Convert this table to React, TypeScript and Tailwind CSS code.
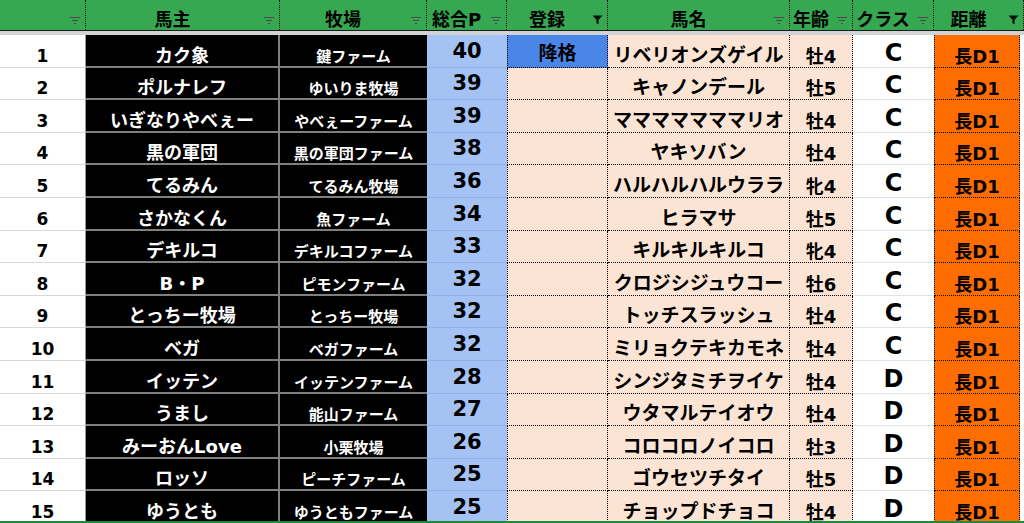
import React from "react";

type Row = [number, string, string, number, string, string, string, string];

const rows: Row[] = [
  [1, "カク象", "鍵ファーム", 40, "降格", "リベリオンズゲイル", "牡4", "C"],
  [2, "ポルナレフ", "ゆいりま牧場", 39, "", "キャノンデール", "牡5", "C"],
  [3, "いぎなりやべぇー", "やべぇーファーム", 39, "", "マママママママリオ", "牡4", "C"],
  [4, "黒の軍団", "黒の軍団ファーム", 38, "", "ヤキソバン", "牡4", "C"],
  [5, "てるみん", "てるみん牧場", 36, "", "ハルハルハルウララ", "牝4", "C"],
  [6, "さかなくん", "魚ファーム", 34, "", "ヒラマサ", "牡5", "C"],
  [7, "デキルコ", "デキルコファーム", 33, "", "キルキルキルコ", "牝4", "C"],
  [8, "B・P", "ピモンファーム", 32, "", "クロジシジュウコー", "牡6", "C"],
  [9, "とっちー牧場", "とっちー牧場", 32, "", "トッチスラッシュ", "牡4", "C"],
  [10, "ベガ", "ベガファーム", 32, "", "ミリョクテキカモネ", "牡4", "C"],
  [11, "イッテン", "イッテンファーム", 28, "", "シンジタミチヲイケ", "牡4", "D"],
  [12, "うまし", "能山ファーム", 27, "", "ウタマルテイオウ", "牡4", "D"],
  [13, "みーおんLove", "小栗牧場", 26, "", "コロコロノイコロ", "牡3", "D"],
  [14, "ロッソ", "ピーチファーム", 25, "", "ゴウセツチタイ", "牡5", "D"],
  [15, "ゆうとも", "ゆうともファーム", 25, "", "チョップドチョコ", "牡4", "D"],
];

function SortIcon() {
  return (
    <svg width="12" height="9" viewBox="0 0 12 9">
      <path d="M1 1.5h10M3 4.5h6M5 7.5h2" stroke="#4a4a4a" strokeWidth="1.2" />
    </svg>
  );
}

function FunnelIcon() {
  return (
    <svg width="11" height="10" viewBox="0 0 11 10">
      <path d="M0.5 0.5h10L6.6 4.8v4.7L4.4 8V4.8z" fill="#111" />
    </svg>
  );
}

function HeaderCell({ label, funnel }: { label: string; funnel?: boolean }) {
  return (
    <div className="flex h-full items-end border-r border-dotted border-black">
      <div className="flex-1 pb-[1px] text-center text-[18px] font-bold leading-none text-black">{label}</div>
      <div className="flex w-[20px] justify-center pb-[5px]">{funnel ? <FunnelIcon /> : <SortIcon />}</div>
    </div>
  );
}

export default function App() {
  return (
    <div className="h-[523px] w-[1024px] overflow-hidden border-b-2 border-[#1f8a3c] bg-white font-['DejaVu_Sans','Noto_Sans_CJK_JP',sans-serif]">
      <div className="grid h-[31px] grid-cols-[86px_194px_147px_80px_101px_182px_63px_81px_90px] border-b border-[#1a1a1a] bg-[#36a852]">
        <HeaderCell label="" />
        <HeaderCell label="馬主" />
        <HeaderCell label="牧場" />
        <HeaderCell label="総合P" />
        <HeaderCell label="登録" funnel />
        <HeaderCell label="馬名" />
        <HeaderCell label="年齢" />
        <HeaderCell label="クラス" />
        <HeaderCell label="距離" funnel />
      </div>
      <div className="h-[4px] bg-[#d2d3d7]" />
      <div className="grid auto-rows-[32.6px] grid-cols-[86px_194px_147px_80px_101px_182px_63px_81px_86px_4px]">
        {rows.map((r) => (
          <React.Fragment key={r[0]}>
            <div className="flex items-end justify-center border-r border-b border-r-[#9a9a9a] border-b-[#d9d9d9] pb-[2px] text-[17px] font-bold leading-none text-black">
              {r[0]}
            </div>
            <div className="flex items-end justify-center border-r-2 border-b-2 border-[#7f7f7f] bg-black pb-[1px] text-[18px] font-bold leading-none text-white">
              {r[1]}
            </div>
            <div className="flex items-end justify-center border-b-2 border-[#7f7f7f] bg-black pb-[1px] text-[15px] font-bold leading-none text-white">
              {r[2]}
            </div>
            <div className="flex items-end justify-center border-b border-[#8fb0e8] bg-[#a4c2f4] pb-[5px] text-[21px] font-bold leading-none text-black">
              {r[3]}
            </div>
            <div
              className={
                r[4]
                  ? "flex items-end justify-center border-x border-b border-dotted border-black bg-[#4a86e8] pb-[4px] text-[19px] font-bold leading-none text-black"
                  : "flex items-end justify-center border-x border-b border-dotted border-black bg-[#fce4d4] pb-[4px] text-[19px] font-bold leading-none text-black"
              }
            >
              {r[4]}
            </div>
            <div className="flex items-end justify-center border-r border-b border-dotted border-black bg-[#fce4d4] pb-[2px] text-[19px] font-bold leading-none text-black">
              {r[5]}
            </div>
            <div className="flex items-end justify-center border-r border-b border-dotted border-black bg-[#fce4d4] pb-[1px] text-[18px] font-bold leading-none text-black">
              {r[6]}
            </div>
            <div className="flex items-end justify-center border-b border-[#e2e2e2] bg-white pb-[2px] text-[24px] font-bold leading-none text-black">
              {r[7]}
            </div>
            <div className="flex items-end justify-center border-x border-b border-dotted border-black bg-[#ff6d01] pb-[1px] text-[18px] font-bold leading-none text-black">
              長D1
            </div>
            <div className="bg-white" />
          </React.Fragment>
        ))}
      </div>
    </div>
  );
}
